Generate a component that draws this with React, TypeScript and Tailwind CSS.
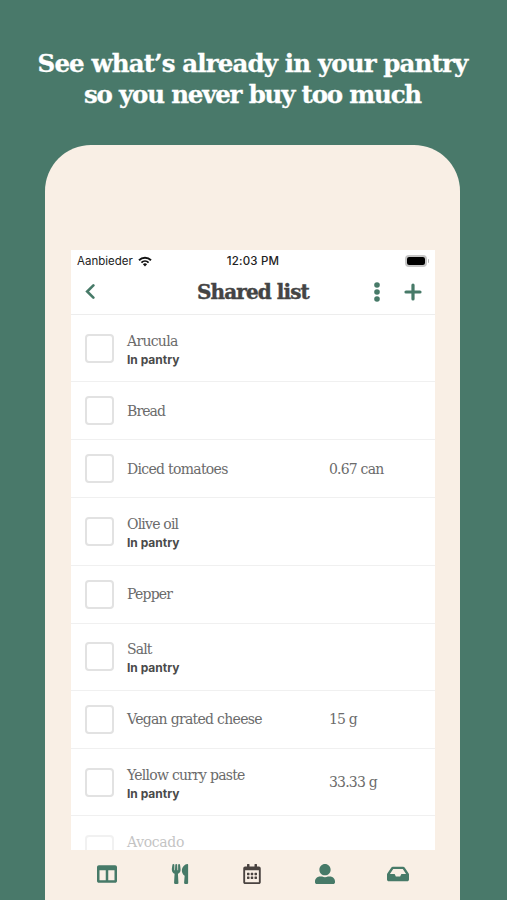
import { FaColumns, FaInbox, FaRegCalendarAlt, FaUserAlt, FaUtensils } from "react-icons/fa";

const items = [
  { name: "Arucula", inPantry: true, tracking: "tracking-[-0.7px]" },
  { name: "Bread", tracking: "tracking-[-0.9px]" },
  { name: "Diced tomatoes", amount: "0.67 can", tracking: "tracking-[-0.7px]" },
  { name: "Olive oil", inPantry: true, tracking: "tracking-[-0.8px]" },
  { name: "Pepper", tracking: "tracking-[-0.8px]" },
  { name: "Salt", inPantry: true, tracking: "tracking-[-0.9px]" },
  { name: "Vegan grated cheese", amount: "15 g", tracking: "tracking-[-0.7px]" },
  { name: "Yellow curry paste", amount: "33.33 g", inPantry: true, tracking: "tracking-[-0.75px]" },
];

const tabs = [
  { label: "Overview", icon: FaColumns, className: "h-[20px] w-[20px] text-[#477a68]" },
  { label: "Recipes", icon: FaUtensils, className: "h-[20px] w-[18px] text-[#477a68]" },
  { label: "Planner", icon: FaRegCalendarAlt, className: "h-[20px] w-[18px] text-[#4a4340]" },
  { label: "Profile", icon: FaUserAlt, className: "h-[20px] w-[20px] text-[#477a68]" },
  { label: "Inbox", icon: FaInbox, className: "h-[22px] w-[22px] text-[#477a68]" },
];

const slab = "font-['DejaVu_Serif',serif]";

function StatusBar() {
  return (
    <div className="grid h-[22px] shrink-0 grid-cols-3 items-center px-[6px] font-[Inter,sans-serif] text-[11.5px] leading-none text-[#222]">
      <div className="flex items-center gap-[5px]">
        <span className="pt-[2px]">Aanbieder</span>
        <svg viewBox="0 0 28 22" className="h-[11px] w-[14px]" aria-hidden="true">
          <path d="M2 8.5a17 17 0 0 1 24 0M6.8 13.2a10.3 10.3 0 0 1 14.4 0" fill="none" stroke="#111" strokeWidth="3.8" />
          <path d="M14 21l-4.2-4.3a6 6 0 0 1 8.4 0z" fill="#111" />
        </svg>
      </div>
      <span className="whitespace-nowrap pt-[2px] text-center font-medium tracking-[0.2px]">12:03 PM</span>
      <div className="flex items-center justify-end gap-px">
        <div className="h-[12px] w-[22px] rounded-[4px] border-2 border-[#c6c6c6]">
          <div className="h-full rounded-[2px] bg-black" />
        </div>
        <div className="h-1 w-px rounded-r bg-[#b5b5b5]" />
      </div>
    </div>
  );
}

function Header() {
  return (
    <header className="flex h-[43px] shrink-0 items-center border-b border-[#ededed] pb-[3px] pl-[14px] pr-[13px] text-[#477a68]">
      <svg viewBox="0 0 10 16" className="h-[15px] w-[10px]" fill="none" stroke="currentColor" strokeWidth="2.8" aria-hidden="true">
        <path d="M8.6 1.5L2 8l6.6 6.5" strokeLinecap="round" />
      </svg>
      <h2
        className={`${slab} ml-[102px] w-[113px] whitespace-nowrap text-[20px] font-bold leading-none tracking-[-0.9px] text-[#444] [-webkit-text-stroke:0.4px_#444]`}
      >
        Shared list
      </h2>
      <svg viewBox="0 0 6 20" className="ml-auto h-[20px] w-[6px]" fill="currentColor" aria-hidden="true">
        <circle cx="3" cy="3" r="2.8" />
        <circle cx="3" cy="10" r="2.8" />
        <circle cx="3" cy="17" r="2.8" />
      </svg>
      <svg viewBox="0 0 18 18" className="ml-[24px] h-[18px] w-[18px]" stroke="currentColor" strokeWidth="3.2" strokeLinecap="round" aria-hidden="true">
        <path d="M9 2v14M2 9h14" />
      </svg>
    </header>
  );
}

function Checkbox() {
  return <span className="block h-[29px] w-[29px] shrink-0 rounded-[4px] border-2 border-[#e2e2e2] bg-white" />;
}

export default function App() {
  return (
    <main className="h-[900px] w-[507px] overflow-hidden bg-[#49796a]">
      <h1
        className={`${slab} h-[145px] whitespace-nowrap pr-[2px] pt-[48px] text-center text-[24.5px] font-bold leading-[31px] tracking-[-0.87px] text-white [-webkit-text-stroke:0.3px_white]`}
      >
        See what’s already in your pantry
        <br />
        <span className="tracking-[-1.2px]">so you never buy too much</span>
      </h1>

      <div className="ml-[45px] flex h-[755px] w-[415px] flex-col rounded-t-[46px] bg-[#f9efe5] px-[26px] pt-[105px]">
        <section className="flex h-[600px] w-[364px] shrink-0 flex-col overflow-hidden bg-white">
          <StatusBar />
          <Header />
          <ul className={`${slab} shrink-0 text-[14px] leading-[18px] text-[#6b6b6b]`}>
            {items.map((item) => (
              <li
                key={item.name}
                className={`flex items-center border-b border-[#f0f0f0] pl-[14px] ${item.inPantry ? "h-[67.1px]" : "h-[58.2px]"}`}
              >
                <Checkbox />
                <div className={`ml-[13px] w-[202px] whitespace-nowrap ${item.inPantry ? "pt-[4px]" : ""}`}>
                  <p className={item.tracking}>{item.name}</p>
                  {item.inPantry && (
                    <p className="mt-px font-[Inter,sans-serif] text-[12px] font-bold text-[#4a4a4a]">In pantry</p>
                  )}
                </div>
                <span className="tracking-[-0.8px]">{item.amount}</span>
              </li>
            ))}
            {/* Next row fades out under the tab bar */}
            <li className="flex h-[67px] pl-[14px] pt-[19px]">
              <div className="opacity-45">
                <Checkbox />
              </div>
              <p className="ml-[13px] h-[15px] leading-[15px] tracking-[-0.35px] opacity-40">Avocado</p>
            </li>
          </ul>
        </section>

        <nav className="grid h-[47px] w-[363px] shrink-0 grid-cols-5 items-center">
          {tabs.map(({ label, icon: Icon, className }) => (
            <button key={label} aria-label={label} className="flex justify-center">
              <Icon className={className} />
            </button>
          ))}
        </nav>
      </div>
    </main>
  );
}
